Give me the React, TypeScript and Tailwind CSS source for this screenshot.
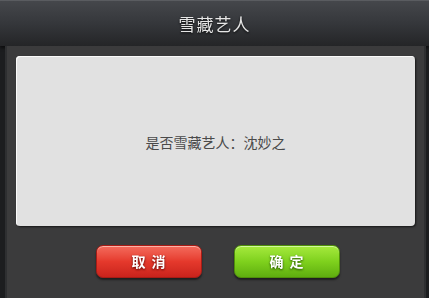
import React from "react";

const font = { fontFamily: '"Noto Sans CJK SC", "Noto Sans", sans-serif' };

export default function App() {
  return (
    <div className="w-[429px] h-[298px] bg-[#1c1d1f] flex flex-col overflow-hidden" style={font}>
      {/* Title bar */}
      <div className="h-[46px] shrink-0 flex items-center justify-center bg-gradient-to-b from-[#45474b] via-[#35373b] to-[#242527] border-t border-[#5a5c60] shadow-[0_2px_3px_rgba(0,0,0,0.6)]">
        <span className="text-[17px] text-[#e6e6e6] tracking-[1px] drop-shadow-[0_1px_1px_rgba(0,0,0,0.8)]">
          雪藏艺人
        </span>
      </div>

      {/* Body */}
      <div className="flex-1 flex pl-[5px] pr-[3px]">
        <div className="flex-1 flex flex-col bg-[#3b3b3c] border-l-[2px] border-r-[2px] border-[#2e2f31] px-[9px] pt-[10px]">
          <div className="h-[170px] rounded-[4px] bg-[#e1e1e1] flex items-center justify-center shadow-[1px_1px_2px_rgba(0,0,0,0.6),inset_1px_1px_0_#fafafa]">
            <span className="text-[14px] text-[#4a4a4a] mt-[2px]">是否雪藏艺人：沈妙之</span>
          </div>
          <div className="flex justify-center gap-[32px] mt-[19px] ml-[4px]">
            <button className="w-[106px] h-[33px] rounded-[7px] bg-gradient-to-b from-[#f46a5c] via-[#e5392c] to-[#c9231c] border border-[#a81c16] shadow-[inset_0_1px_0_rgba(255,210,200,0.7),0_2px_2px_rgba(0,0,0,0.5)] flex items-center justify-center">
              <span className="text-[14px] font-bold text-white tracking-[6px] pl-[6px] drop-shadow-[0_1px_1px_rgba(80,0,0,0.9)]">取消</span>
            </button>
            <button className="w-[106px] h-[33px] rounded-[7px] bg-gradient-to-b from-[#a6ea3c] via-[#7fd11d] to-[#5fae0f] border border-[#4f8f0a] shadow-[inset_0_1px_0_rgba(230,255,200,0.7),0_2px_2px_rgba(0,0,0,0.5)] flex items-center justify-center">
              <span className="text-[14px] font-bold text-white tracking-[6px] pl-[6px] drop-shadow-[0_1px_1px_rgba(30,70,0,0.9)]">确定</span>
            </button>
          </div>
        </div>
      </div>
    </div>
  );
}
